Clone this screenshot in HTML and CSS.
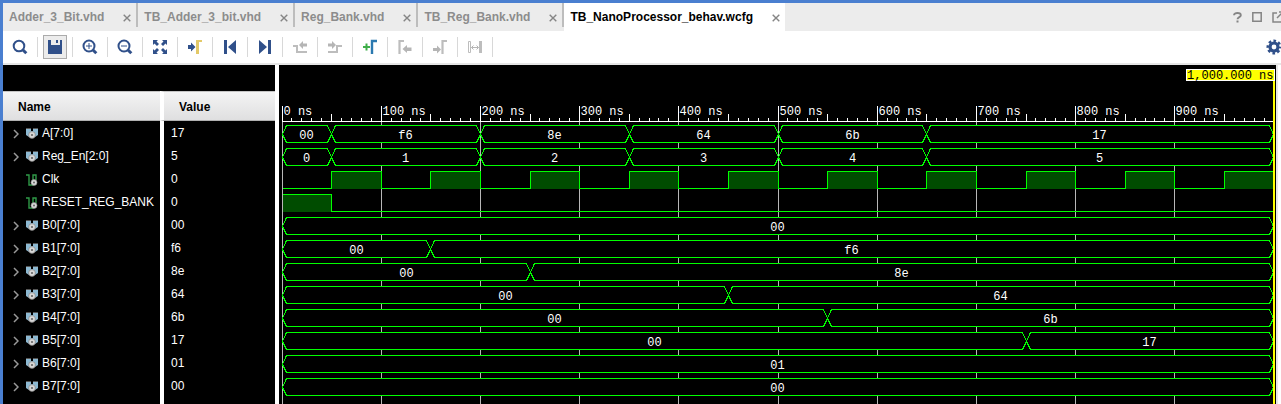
FILE: index.html
```html
<!DOCTYPE html>
<html lang="en">
<head>
<meta charset="utf-8">
<title>TB_NanoProcessor_behav.wcfg</title>
<link rel="stylesheet" href="styles.css">
</head>
<body>
<svg class="defs" width="0" height="0" aria-hidden="true">
  <symbol id="close" viewBox="0 0 8 8"><path d="M.7 .7 7.3 7.3M7.3 .7 .7 7.3" stroke="currentColor" stroke-width="1.4"/></symbol>
  <symbol id="chev" viewBox="0 0 6 10"><path d="M1 1l4 4-4 4" fill="none" stroke="#999" stroke-width="1.5"/></symbol>
  <symbol id="bus" viewBox="0 0 12 12">
    <path d="M0 1h5v2h2V1h5v6l-3 2H3L0 7z" fill="#8db9d2"/><path d="M0 0h5v1H0zM7 0h5v1H7z" fill="#555"/>
    <circle cx="6" cy="7" r="3.400" fill="#d8d8d8" stroke="#777" stroke-width=".6"/><circle cx="6" cy="7" r="1.100" fill="#666"/>
  </symbol>
  <symbol id="bit" viewBox="0 0 12 12">
    <path d="M0 1h3v10h4V1h3v5" fill="none" stroke="#2f9a48" stroke-width="1.400"/>
    <circle cx="8" cy="8.500" r="3" fill="#d8d8d8" stroke="#888" stroke-width=".6"/><circle cx="8" cy="8.500" r="1" fill="#666"/>
  </symbol>
</svg>

<div class="window">
  <header class="tabs">
    <div class="tab"><button class="tab-label">Adder_3_Bit.vhd</button><button class="x" aria-label="Close Adder_3_Bit.vhd"><svg><use href="#close"/></svg></button></div>
    <div class="tab"><button class="tab-label">TB_Adder_3_bit.vhd</button><button class="x" aria-label="Close TB_Adder_3_bit.vhd"><svg><use href="#close"/></svg></button></div>
    <div class="tab"><button class="tab-label">Reg_Bank.vhd</button><button class="x" aria-label="Close Reg_Bank.vhd"><svg><use href="#close"/></svg></button></div>
    <div class="tab"><button class="tab-label">TB_Reg_Bank.vhd</button><button class="x" aria-label="Close TB_Reg_Bank.vhd"><svg><use href="#close"/></svg></button></div>
    <div class="tab active"><button class="tab-label">TB_NanoProcessor_behav.wcfg</button><button class="x" aria-label="Close TB_NanoProcessor_behav.wcfg"><svg><use href="#close"/></svg></button></div>
    <div class="window-actions">
      <button class="help" aria-label="Help"><svg width="9" height="11" viewBox="0 0 9 11"><path d="M1 3.200C1 .2 7.800 .2 7.800 3.200 7.800 5.200 4.500 5 4.500 7.300" fill="none" stroke="#858585" stroke-width="1.900"/><path d="M3.500 8.500h2v2h-2z" fill="#858585"/></svg></button>
      <button aria-label="Maximize"><svg width="10" height="10" viewBox="0 0 10 10"><path d="M.8 .8h8.400v8.400H.8z" fill="none" stroke="#858585" stroke-width="1.500"/></svg></button>
      <button aria-label="Float"><svg width="12" height="12" viewBox="0 0 12 12"><path d="M5 2H1v9h9V7M7 1h4v4M11 1 5 7" fill="none" stroke="#858585" stroke-width="1.500"/></svg></button>
    </div>
  </header>

  <div class="toolbar" role="toolbar">
    <div class="cell"><button aria-label="Find"><svg viewBox="0 0 16 16"><circle cx="7" cy="7" r="5.300" class="n"/><path d="m11 11 3.300 3.300" class="n"/></svg></button></div>
    <div class="cell"><button class="pressed" aria-label="Save"><svg viewBox="0 0 16 16"><path d="M1 1h3v5h9V1h2v14H1z" fill="#30508a"/><path d="M9 1h2v3H9z" fill="#30508a"/></svg></button></div>
    <div class="cell"><button aria-label="Zoom in"><svg viewBox="0 0 16 16"><circle cx="7" cy="7" r="5.500" class="n"/><path d="m11 11 3.300 3.300" class="n"/><path d="M4 7h6M7 4v6" class="n"/></svg></button></div>
    <div class="cell"><button aria-label="Zoom out"><svg viewBox="0 0 16 16"><circle cx="7" cy="7" r="5.500" class="n"/><path d="m11 11 3.300 3.300" class="n"/><path d="M4 7h6" class="n"/></svg></button></div>
    <div class="cell"><button aria-label="Zoom fit"><svg viewBox="0 0 16 16"><path d="M1 1h5L4.500 2.500 7 5 5 7 2.500 4.500 1 6zM15 1v5l-1.500-1.500L11 7 9 5l2.500-2.500L10 1zM1 15v-5l1.500 1.500L5 9l2 2-2.500 2.500L6 15zM15 15h-5l1.500-1.500L9 11l2-2 2.500 2.500L15 10z" fill="#30508a"/></svg></button></div>
    <div class="cell"><button aria-label="Go to cursor"><svg viewBox="0 0 16 16"><path d="M1 6h3V3.500L8.500 8 4 12.500V10H1z" fill="#30508a"/><path d="M9 1h6v2h-3v12H9z" fill="#e3c968"/></svg></button></div>
    <div class="cell"><button aria-label="Go to start"><svg viewBox="0 0 16 16"><path d="M2 1h3v14H2zM14 1v14L6 8z" fill="#30508a"/></svg></button></div>
    <div class="cell"><button aria-label="Go to end"><svg viewBox="0 0 16 16"><path d="M11 1h3v14h-3zM2 1v14l8-7z" fill="#30508a"/></svg></button></div>
    <div class="cell"><button aria-label="Previous transition"><svg viewBox="0 0 16 16"><path d="M1 7h4v6h10" fill="none" stroke="#bdbdbd" stroke-width="2"/><path d="M7 6l4-4v2.500h4v3h-4V10z" fill="#b5b5b5"/></svg></button></div>
    <div class="cell"><button aria-label="Next transition"><svg viewBox="0 0 16 16"><path d="M1 13h9V7h5" fill="none" stroke="#bdbdbd" stroke-width="2"/><path d="M9 6 5 2v2.500H1v3h4V10z" fill="#b5b5b5"/></svg></button></div>
    <div class="cell"><button aria-label="Add marker"><svg viewBox="0 0 16 16"><path d="M1 8h7M4.500 4.500v7" stroke="#3fae49" stroke-width="2"/><path d="M10 15V2h5" fill="none" stroke="#2b79b0" stroke-width="2.400"/></svg></button></div>
    <div class="cell"><button aria-label="Previous marker"><svg viewBox="0 0 16 16"><path d="M2.500 15V2H7" fill="none" stroke="#bdbdbd" stroke-width="2.200"/><path d="M5.500 10 10 6v2.500h4.500v3.500H10V14z" fill="#b5b5b5"/></svg></button></div>
    <div class="cell"><button aria-label="Next marker"><svg viewBox="0 0 16 16"><path d="M10.500 15V2H15" fill="none" stroke="#bdbdbd" stroke-width="2.200"/><path d="M9 10.500 5 6.500V9H1v3h4v2.500z" fill="#b5b5b5"/></svg></button></div>
    <div class="cell"><button aria-label="Measure"><svg viewBox="0 0 16 16"><path d="M1.500 2.500h2v11h-2z" fill="none" stroke="#bdbdbd"/><path d="M12 2h3v12h-3z" fill="#bdbdbd"/><path d="M4.500 8.500h7M6.500 6.500l-2 2 2 2M9.500 6.500l2 2-2 2" fill="none" stroke="#b5b5b5"/></svg></button></div>
    <button class="gear" aria-label="Settings"><svg viewBox="0 0 16 16"><circle cx="8" cy="8" r="4" fill="none" stroke="#30508a" stroke-width="3.200"/><circle cx="8" cy="8" r="6.200" fill="none" stroke="#30508a" stroke-width="2.600" stroke-dasharray="2.600 2.270" stroke-dashoffset="1.300"/></svg></button>
  </div>

  <main class="content">
    <div class="signals">
      <table>
        <thead><tr><th>Name</th><th>Value</th></tr></thead>
        <tbody id="rows"></tbody>
      </table>
      <div class="rest"></div>
    </div>
    <div class="wave"><svg id="wave" role="img" aria-label="Waveform"></svg></div>
  </main>
</div>
<script src="wave.js"></script>
</body>
</html>
```
FILE: styles.css
```css
* { box-sizing: border-box; }

body {
  margin: 0;
  font: 12px/21px "Liberation Sans", Arial, sans-serif;
  color: #000;
  background: #fff;
}

button {
  margin: 0;
  padding: 0;
  border: 0;
  background: none;
  font: inherit;
  color: inherit;
}

svg { display: block; }
.defs { position: absolute; }

.window {
  display: flex;
  flex-direction: column;
  min-height: 100vh;
  border-top: 3px solid #4a7fd0;
  border-left: 3px solid #4a7fd0;
  overflow: hidden;
}

.tabs {
  display: flex;
  align-items: flex-start;
  height: 28px;
  background: #ececec;
}

.tab {
  display: flex;
  align-items: center;
  gap: 19px;
  height: 24px;
  padding: 4px 5px 0 6px;
  border-right: 2px solid #bdbdbd;
  font-weight: bold;
  color: #8c8c8c;
}

.tab-label { white-space: nowrap; }

.tab.active {
  height: 28px;
  padding-bottom: 4px;
  border-right: 0;
  background: #fff;
  color: #000;
}

.x {
  padding-top: 2px;
  color: #858585;
}

.x svg {
  width: 8px;
  height: 8px;
}

.window-actions {
  display: flex;
  align-items: center;
  gap: 10px;
  height: 28px;
  margin-left: auto;
  margin-right: -3px;
}

.toolbar {
  display: flex;
  align-items: center;
  height: 34px;
  border-bottom: 2px solid #e6e6e6;
}

.cell {
  display: flex;
  align-items: center;
  justify-content: center;
  width: 35px;
  height: 20px;
  border-right: 1px solid #d8d8d8;
}

.toolbar svg {
  width: 16px;
  height: 16px;
}

.n {
  fill: none;
  stroke: #30508a;
  stroke-width: 2px;
}

.n + .n { stroke-width: 3px; }
.n + .n + .n { stroke-width: 1px; }

.pressed {
  padding: 3px;
  border: 1px solid #ababab;
  background: #ececec;
}

.gear {
  margin-left: auto;
  margin-right: -1px;
}

.content {
  display: flex;
  flex: 1;
}

.signals {
  display: flex;
  flex: none;
  flex-direction: column;
  width: 276px;
  padding-top: 26px;
  border-right: 4px solid #fff;
  background: #000;
  color: #fff;
}

.rest {
  flex: 1;
  width: 161px;
  border-right: 4px solid #fff;
}

table {
  width: 100%;
  table-layout: fixed;
  border-collapse: separate;
  border-spacing: 0;
}

th {
  height: 30px;
  padding: 2px 0 0 15px;
  border-top: 1px solid #c4c4c4;
  border-bottom: 1px solid #b0b0b0;
  background: linear-gradient(#f4f4f4, #dfdfe0);
  color: #000;
  text-align: left;
}

th:first-child { width: 157px; }

th + th,
td + td { border-left: 4px solid #fff; }

td {
  height: 23px;
  padding: 2px 0 0 7px;
}

td:first-child { padding-left: 10px; }

.sig {
  display: flex;
  align-items: center;
  white-space: nowrap;
}

.chev {
  width: 6px;
  height: 10px;
  margin-right: 7px;
}

.kind {
  width: 12px;
  height: 12px;
  margin-right: 4px;
}

.wave {
  flex: 1;
  min-width: 0;
  min-height: 334px;
  margin-right: 3px;
  border-right: 2px solid #e6e6e6;
  background: #000;
}

#wave {
  width: 100%;
  height: 100%;
}

#wave text {
  font: 12px "Liberation Mono", "Courier New", monospace;
  fill: #fff;
}

#wave .middle { text-anchor: middle; }
#wave .end { text-anchor: end; }
#wave .marker-text { fill: #000; }

.grid, .tick, .trace, .bus-shape, .fill, .marker, .marker-box { shape-rendering: crispEdges; }
.grid { stroke: #b8b8b8; }
.tick { stroke: #fff; }
.trace { fill: none; stroke: #0f0; }
.bus-shape { fill: #000; stroke: #0f0; }
.fill { fill: #004c00; }
.marker { fill: #ff0; }
.marker-box { fill: #ff0; stroke: #fff; }
```
FILE: wave.js
```js
// Bus signals list [start time, value]; bit signals list their high intervals.
const END = 1000;
const clkHigh = Array.from({ length: 10 }, (_, i) => [i * 100 + 50, i * 100 + 100]);
const signals = [
  { name: "A[7:0]", value: "17", bus: [[0, "00"], [50, "f6"], [200, "8e"], [350, "64"], [500, "6b"], [650, "17"]] },
  { name: "Reg_En[2:0]", value: "5", bus: [[0, "0"], [50, "1"], [200, "2"], [350, "3"], [500, "4"], [650, "5"]] },
  { name: "Clk", value: "0", high: clkHigh },
  { name: "RESET_REG_BANK", value: "0", high: [[0, 50]] },
  { name: "B0[7:0]", value: "00", bus: [[0, "00"]] },
  { name: "B1[7:0]", value: "f6", bus: [[0, "00"], [150, "f6"]] },
  { name: "B2[7:0]", value: "8e", bus: [[0, "00"], [250, "8e"]] },
  { name: "B3[7:0]", value: "64", bus: [[0, "00"], [450, "64"]] },
  { name: "B4[7:0]", value: "6b", bus: [[0, "00"], [550, "6b"]] },
  { name: "B5[7:0]", value: "17", bus: [[0, "00"], [750, "17"]] },
  { name: "B6[7:0]", value: "01", bus: [[0, "01"]] },
  { name: "B7[7:0]", value: "00", bus: [[0, "00"]] }
];

document.getElementById("rows").innerHTML = signals.map(s => `
  <tr><td><div class="sig"><svg class="chev">${s.bus ? '<use href="#chev"/>' : ""}</svg>
  <svg class="kind"><use href="#${s.bus ? "bus" : "bit"}"/></svg><span>${s.name}</span></div></td>
  <td>${s.value}</td></tr>`).join("");

const svg = document.getElementById("wave");

function draw() {
  const { width, height } = svg.getBoundingClientRect();
  const left = 3;
  const span = width - 5;
  const x = t => Math.min(Math.floor(left + t * span / END), width - 3);
  const base = 56;
  const path = (cls, d) => `<path class="${cls}" d="${d}"/>`;
  const text = (cls, tx, ty, s) => `<text class="${cls}" x="${tx}" y="${ty}">${s}</text>`;
  let out = "";

  for (let t = 0; t < END; t += 100) out += path("grid", `M${x(t)} ${base}V${height}`);
  for (let t = 0; t < END; t += 10) {
    const top = t % 100 === 0 ? 40 : t % 50 === 0 ? 48 : 52;
    out += path("tick", `M${x(t)} ${top}V${base}`);
    if (t % 100 === 0) out += text("", x(t) + 1, 49, `${t} ns`);
  }
  out += path("tick", `M${left} ${base}H${x(END)}`);

  signals.forEach((s, i) => {
    const top = 60 + i * 23;
    const bottom = top + 17;
    if (s.bus) {
      s.bus.forEach(([t, label], k) => {
        const a = x(t);
        const b = x(k + 1 < s.bus.length ? s.bus[k + 1][0] : END);
        const mid = top + 9;
        out += path("bus-shape", `M${a} ${mid}L${a + 4} ${top}H${b - 4}L${b} ${mid}L${b - 4} ${bottom}H${a + 4}Z`);
        out += text("middle", Math.floor((a + b) / 2), top + 13, label);
      });
    } else {
      let d = `M${left} ${s.high[0][0] === 0 ? top : bottom}`;
      s.high.forEach(([t0, t1]) => {
        out += `<rect class="fill" x="${x(t0)}" y="${top}" width="${x(t1) - x(t0)}" height="17"/>`;
        d += `H${x(t0)}V${top}H${x(t1)}V${bottom}`;
      });
      out += path("trace", `${d}H${x(END)}`);
    }
  });

  out += `<rect class="marker" x="${x(END) - 1}" y="15" width="2" height="${height - 15}"/>`;
  out += `<rect class="marker-box" x="${x(END) - 87}" y="4" width="88" height="11"/>`;
  out += text("end marker-text", x(END), 13, "1,000.000 ns");
  svg.innerHTML = `<g transform="translate(0.5 0.5)">${out}</g>`;
}

draw();
window.addEventListener("resize", draw);
```
